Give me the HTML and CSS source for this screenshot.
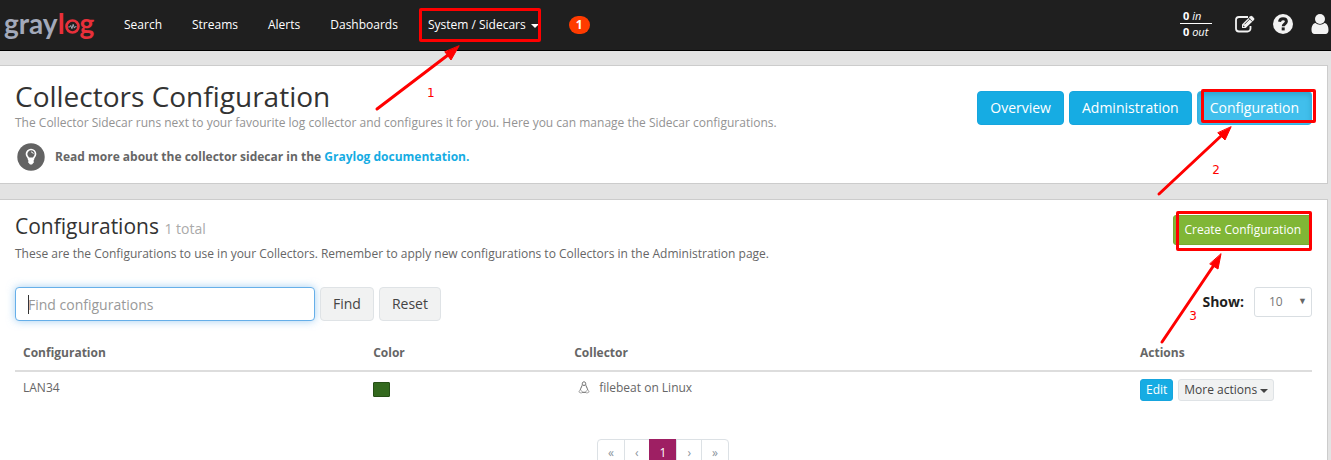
FILE: index.html
```html
<!DOCTYPE html>
<html lang="en">
<head>
<meta charset="utf-8">
<title>Collectors Configuration</title>
<link rel="stylesheet" href="styles.css">
</head>
<body>
<header class="navbar">
  <a class="logo" href="#" aria-label="graylog"><span class="logo-gray">gray</span><span class="logo-red">l<svg class="logo-o" viewBox="0 0 16 16" aria-hidden="true"><circle cx="8" cy="8" r="6.400" fill="none" stroke="#e8303a" stroke-width="2.800"/><path d="M3.500 8.500h1.600l1-1.600 1.300 3.400 1.300-4.600 1.300 4 .9-1.500h1.400" fill="none" stroke="#a9aebc" stroke-width="1"/></svg>g</span></a>
  <nav class="nav">
    <a href="#">Search</a>
    <a href="#">Streams</a>
    <a href="#">Alerts</a>
    <a href="#">Dashboards</a>
    <a class="marked" href="#">System / Sidecars<span class="caret"></span><span class="frame frame-nav"></span></a>
    <span class="badge">1</span>
  </nav>
  <div class="tools">
    <div class="throughput"><div class="rate rate-in"><b>0</b> <i>in</i></div><div class="rate"><b>0</b> <i>out</i></div></div>
    <a class="tool" href="#" aria-label="Scratchpad"><svg width="20" height="18" viewBox="0 0 20 18"><path d="M13 2H4a3 3 0 0 0-3 3v8.500a3 3 0 0 0 3 3h8.500a3 3 0 0 0 3-3V11" fill="none" stroke="#f2f2f2" stroke-width="1.800"/><path d="M7 9.500 15.300 1.200a1.300 1.300 0 0 1 1.800 0l1.900 1.900a1.300 1.300 0 0 1 0 1.800L10.700 13H7z" fill="#f2f2f2"/><path d="M9.500 9.300 15 3.800M13.800 3l3.600 3.600" stroke="#1f1f1f" stroke-width=".8"/><path d="M8.200 10.200v1.700h1.700z" fill="#1f1f1f"/></svg></a>
    <a class="tool" href="#" aria-label="Help"><svg width="20" height="20" viewBox="0 0 20 20"><circle cx="10" cy="10" r="10" fill="#f2f2f2"/><path d="M6.500 7.800C6.800 5.700 8.200 4.800 10 4.800c2 0 3.400 1.200 3.400 2.800 0 2.300-3.200 2.400-3.200 4.600" fill="none" stroke="#1f1f1f" stroke-width="3"/><rect x="8.700" y="13.400" width="3" height="3" fill="#1f1f1f"/></svg></a>
    <a class="tool" href="#" aria-label="User"><svg width="18" height="20" viewBox="0 0 18 20"><path d="M4.600 9C1.600 9.600.5 12.500.5 16c0 2.600 1.200 4 3 4h11c1.800 0 3-1.400 3-4 0-3.500-1.100-6.400-4.100-7-1.200 1.100-2.700 1.700-4.400 1.700S5.800 10.100 4.600 9z" fill="#f2f2f2"/><circle cx="9" cy="5" r="5" fill="#f2f2f2"/></svg></a>
  </div>
  <svg class="arrow arrow-one" width="90" height="70" viewBox="0 0 90 70" aria-hidden="true"><path d="M3 65 74 11" /><path class="head" d="M85 2 77 16 71 8z"/></svg>
  <span class="step step-one">1</span>
</header>

<main>
  <section class="panel intro">
    <div class="intro-text">
      <h1>Collectors Configuration</h1>
      <p class="lead">The Collector Sidecar runs next to your favourite log collector and configures it for you. Here you can manage the Sidecar configurations.</p>
      <p class="docs"><svg width="28" height="28" viewBox="0 0 28 28" aria-hidden="true"><circle cx="14" cy="14" r="13.700" fill="#636363"/><path d="M11.700 16.200c0-1.900-2.200-2.700-2.200-5.200a4.500 4.500 0 0 1 9 0c0 2.500-2.200 3.300-2.200 5.200z" fill="none" stroke="#fff" stroke-width="1.700"/><path d="M14 9c1.300 0 2.100.7 2.200 1.800" fill="none" stroke="#fff" stroke-width="1"/><path d="M11.300 14.500h5.400v5L15 21.500h-2l-1.700-2z" fill="#fff"/></svg><span>Read more about the collector sidecar in the <a href="#">Graylog documentation</a><span class="dot">.</span></span></p>
    </div>
    <div class="actions marked">
      <button class="btn info">Overview</button>
      <button class="btn info">Administration</button>
      <button class="btn info active">Configuration</button>
      <span class="frame frame-config"></span>
      <svg class="arrow arrow-two" width="80" height="74" viewBox="0 0 80 74" aria-hidden="true"><path d="M3 70 65 12"/><path class="head" d="M75 3 69 16 62 9z"/></svg>
      <span class="step step-two">2</span>
    </div>
  </section>

  <section class="panel list">
    <div class="list-head">
      <div>
        <h2>Configurations <small>1 total</small></h2>
        <p class="hint">These are the Configurations to use in your Collectors. Remember to apply new configurations to Collectors in the Administration page.</p>
      </div>
      <div class="marked create">
        <button class="btn success">Create Configuration</button>
        <span class="frame frame-create"></span>
        <svg class="arrow arrow-three" width="66" height="94" viewBox="0 0 66 94" aria-hidden="true"><path d="M3 90 55 13"/><path class="head" d="M62 2 59 17 51 12z"/></svg>
        <span class="step step-three">3</span>
      </div>
    </div>
    <div class="filters">
      <form class="search">
        <input type="text" class="query" placeholder="Find configurations" aria-label="Find configurations">
        <button type="button" class="btn default">Find</button>
        <button type="button" class="btn default">Reset</button>
      </form>
      <div class="show"><label for="size">Show:</label><span class="select-wrap"><select id="size"><option>10</option><option>25</option></select></span></div>
    </div>
    <table>
      <colgroup><col class="c-name"><col class="c-color"><col><col class="c-actions"></colgroup>
      <thead><tr><th>Configuration</th><th>Color</th><th>Collector</th><th>Actions</th></tr></thead>
      <tbody><tr>
        <td>LAN34</td>
        <td><span class="swatch"></span></td>
        <td><svg class="tux" width="12" height="13" viewBox="0 0 12 13" aria-hidden="true"><path d="M6 .8C4.600.8 4.200 2 4.300 3.500 4.400 5 2.600 6.500 2.400 9M6 .8c1.400 0 1.800 1.200 1.700 2.700C7.600 5 9.400 6.500 9.600 9M3.800 11.300h4.400M4.800 3.700 6 4.700l1.200-1" fill="none" stroke="#666" stroke-width="1"/><path d="M2.300 8.500.8 11l2.600 1.200 1-1.200zM9.700 8.500l1.500 2.500-2.600 1.200-1-1.200z" fill="#fff" stroke="#888" stroke-width=".7"/></svg>filebeat on Linux</td>
        <td><div class="row-actions"><button class="btn info xs">Edit</button><button class="btn default xs">More actions<span class="caret"></span></button></div></td>
      </tr></tbody>
    </table>
    <nav class="pages" aria-label="Pagination">
      <a href="#">«</a><a href="#">‹</a><a class="current" href="#">1</a><a href="#">›</a><a href="#">»</a>
    </nav>
  </section>
</main>
</body>
</html>
```
FILE: styles.css
```css
* { box-sizing: border-box; }
body {
  margin: 0;
  background: #e3e3e3;
  color: #666;
  font: 12px/18px "Open Sans", "Noto Sans", sans-serif;
}
html { overflow: hidden; }
h1, h2, p { margin: 0; }
a { color: #16ace3; text-decoration: none; }
button, input, select { font: inherit; margin: 0; }

.navbar {
  position: relative;
  display: flex;
  align-items: center;
  height: 51px;
  background: #1f1f1f;
  border-bottom: 1px solid #000;
}
.logo {
  display: block;
  width: 109px;
  padding: 0 0 4px 4px;
  font: 700 28px/36px Lato, sans-serif;
  white-space: nowrap;
}
.logo-gray { color: #a3a9ba; }
.logo-red { color: #e8303a; }
.logo-o { width: 15px; height: 15px; }
.nav { display: flex; align-items: center; }
.nav a { padding: 0 15px; color: #fff; line-height: 20px; white-space: nowrap; }
.caret {
  display: inline-block;
  margin-left: 5px;
  border: 4px solid transparent;
  border-top-color: currentColor;
  border-bottom: 0;
  vertical-align: middle;
}
.badge {
  margin-left: 15px;
  padding: 0 7px;
  border-radius: 9px;
  background: #ff3b00;
  color: #fff;
  font-weight: 700;
}
.tools { display: flex; align-items: center; gap: 18px; margin-left: auto; padding: 0 2px 3px 0; }
.throughput { width: 32px; margin-right: 5px; color: #fff; font-size: 11px; line-height: 15px; }
.rate { padding-left: 3px; white-space: nowrap; }
.rate-in { border-bottom: 1px solid #fff; }
.tool { display: flex; }

.marked { position: relative; }
.frame { position: absolute; border: 3px solid #f00; border-radius: 2px; pointer-events: none; }
.frame-nav { left: 6px; right: 13px; top: -7px; bottom: -7px; }
.frame-config { right: -4px; top: 11px; width: 115px; height: 34px; }
.frame-create { left: 3px; right: 0; top: -2px; height: 40px; }
.arrow { position: absolute; z-index: 2; pointer-events: none; fill: none; stroke: #f00; stroke-width: 3; stroke-linecap: round; }
.head { fill: #f00; stroke-width: 1; }
.step { position: absolute; z-index: 2; color: #f00; font-family: "DejaVu Sans", sans-serif; font-size: 12px; }
.arrow-one { left: 374px; top: 44px; }
.step-one { left: 427px; top: 84px; }
.arrow-two { right: 76px; top: 46px; }
.step-two { right: 92px; top: 83px; }
.arrow-three { right: 87px; top: 39px; }
.step-three { right: 115px; top: 94px; }

.panel { margin-right: 3px; background: #fff; border: 1px solid #ccc; border-left: 0; padding: 0 15px; }
.intro { display: flex; justify-content: space-between; margin-top: 14px; padding-top: 12px; padding-bottom: 12px; }
h1 { color: #333; font-size: 28px; font-weight: 400; line-height: 36px; }
.lead { color: #939393; }
.docs { display: flex; align-items: center; gap: 10px; margin-top: 11px; padding-left: 2px; font-weight: 700; }
.dot { color: #16ace3; }
.actions { display: flex; align-items: flex-start; gap: 5px; padding-top: 13px; align-self: flex-start; }

.btn {
  border: 1px solid transparent;
  border-radius: 4px;
  padding: 6px 12px;
  font-size: 14px;
  line-height: 20px;
  white-space: nowrap;
}
.info { background: #16ace3; border-color: #16a5de; color: #fff; }
.active { background: #41bfec; border-color: #2fb2e5; box-shadow: inset 0 3px 5px #1c7ea366; }
.success { background: #80b636; border-color: #76aa30; color: #fff; padding: 5px 10px; font-size: 12px; line-height: 18px; border-radius: 3px; }
.default { background: #f1f2f2; border-color: #dfe3e6; color: #444; }
.xs { padding: 1px 5px; font-size: 12px; line-height: 18px; border-radius: 3px; }
.xs .caret { margin-left: 3px; }

.list { margin-top: 15px; padding-top: 13px; }
.list-head { display: flex; justify-content: space-between; }
.create { padding-top: 2px; }
h2 { color: #333; font-size: 21px; font-weight: 400; line-height: 26px; }
h2 small { color: #aaa; font-size: 14px; }
.hint { margin-top: 3px; }
.filters { display: flex; justify-content: space-between; align-items: flex-start; margin-top: 24px; }
.search { display: flex; gap: 5px; }
.query {
  width: 300px;
  height: 34px;
  padding: 6px 12px;
  border: 1px solid #66afe9;
  border-radius: 4px;
  outline: 0;
  background: linear-gradient(#333, #333) 12px 7px / 1px 19px no-repeat #fff;
  font-size: 14px;
  box-shadow: 0 0 8px #66afe999;
}
.query:focus { background: #fff; }
.query::placeholder { color: #999; }
.show { display: flex; align-items: center; gap: 10px; }
.show label { color: #1f1f1f; font-size: 14px; font-weight: 700; }
.select-wrap { position: relative; }
.select-wrap::after { content: "▼"; position: absolute; right: 5px; top: 5px; font-size: 9px; pointer-events: none; }
select { appearance: none; width: 58px; height: 30px; padding: 0 14px; border: 1px solid #d9dee2; border-radius: 3px; background: #fff; color: #777; }

table { width: 100%; margin-top: 16px; border-collapse: collapse; table-layout: fixed; }
.c-name { width: 27%; }
.c-color { width: 201px; }
.c-actions { width: 180px; }
th { padding: 7px 8px 8px; border-bottom: 2px solid #ddd; text-align: left; }
td { padding: 7px 8px; vertical-align: top; }
.swatch { display: block; width: 17px; height: 15px; margin-top: 3px; background: #33691e; border: 1px solid #264f16; border-radius: 1px; }
.tux { margin: 0 9px 0 4px; vertical-align: -2px; }
.row-actions { display: flex; gap: 5px; }
.pages { display: flex; justify-content: center; margin-top: 31px; }
.pages a { margin-left: -1px; padding: 5px 10px; border: 1px solid #dce1e5; color: #8a949c; line-height: 16px; }
.pages a:first-child { border-radius: 4px 0 0 4px; }
.pages a:last-child { border-radius: 0 4px 4px 0; }
.pages .current { background: #9e1f63; border-color: #9e1f63; color: #fff; }
```
